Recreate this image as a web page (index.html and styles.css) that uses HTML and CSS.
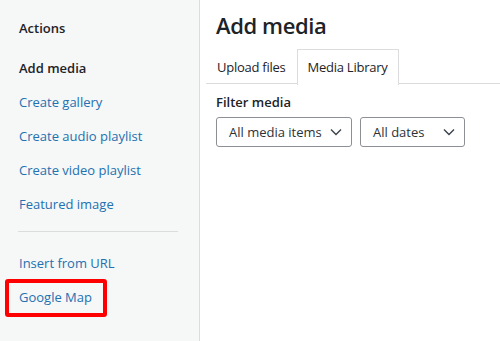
FILE: index.html
```html
<!DOCTYPE html>
<html lang="en">
<head>
<meta charset="utf-8">
<title>Add media</title>
<link rel="stylesheet" href="styles.css">
</head>
<body>
<div class="modal">
  <aside class="menu">
    <h2 class="menu-heading">Actions</h2>
    <ul class="menu-list">
      <li class="menu-item active">Add media</li>
      <li class="menu-item"><a href="#">Create gallery</a></li>
      <li class="menu-item"><a href="#">Create audio playlist</a></li>
      <li class="menu-item"><a href="#">Create video playlist</a></li>
      <li class="menu-item"><a href="#">Featured image</a></li>
    </ul>
    <div class="separator"></div>
    <ul class="menu-list">
      <li class="menu-item"><a href="#">Insert from URL</a></li>
      <li class="menu-item highlighted"><a href="#">Google Map</a></li>
    </ul>
  </aside>
  <main class="content">
    <h1 class="title">Add media</h1>
    <nav class="router">
      <span class="tab">Upload files</span>
      <span class="tab active">Media Library</span>
    </nav>
    <div class="toolbar">
      <div class="filter-label">Filter media</div>
      <div class="filters">
        <div class="select select-type"><span>All media items</span>
          <svg class="chev" width="12" height="8" viewBox="0 0 12 8"><path d="M1 1.5l5 5 5-5" fill="none" stroke="#3c434a" stroke-width="1.4"/></svg>
        </div>
        <div class="select select-date"><span>All dates</span>
          <svg class="chev" width="12" height="8" viewBox="0 0 12 8"><path d="M1 1.5l5 5 5-5" fill="none" stroke="#3c434a" stroke-width="1.4"/></svg>
        </div>
      </div>
    </div>
  </main>
</div>
</body>
</html>
```
FILE: styles.css
```css
*, *::before, *::after { box-sizing: border-box; }
html, body { margin: 0; padding: 0; }
body {
  width: 500px;
  height: 341px;
  overflow: hidden;
  background: #fff;
  font-family: "Open Sans", "Noto Sans", sans-serif;
  color: #1d2327;
}
.modal {
  display: flex;
  height: 341px;
}
.menu {
  width: 200px;
  flex: none;
  background: #f6f7f7;
  border-right: 1px solid #dcdcde;
  padding: 19px 0 0 0;
}
.menu-heading {
  margin: 0 0 14px 19px;
  font-size: 13px;
  line-height: 18px;
  font-weight: 600;
  color: #1d2327;
}
.menu-list {
  list-style: none;
  margin: 0;
  padding: 0;
}
.menu-item {
  padding: 8px 0 8px 19px;
  font-size: 13px;
  line-height: 18px;
}
.menu-item a {
  color: #2271b1;
  text-decoration: none;
}
.menu-item.active {
  font-weight: 600;
  color: #1d2327;
}
.separator {
  height: 1px;
  background: #dcdcde;
  margin: 10px 21px 14px 18px;
}
.highlighted {
  position: relative;
}
.highlighted::after {
  content: "";
  position: absolute;
  left: 5px;
  top: -1px;
  width: 102px;
  height: 38px;
  border: 4px solid #f00;
  border-radius: 3px;
}
.content {
  flex: 1;
  padding: 0 0 0 16px;
}
.title {
  margin: 0;
  padding-top: 10px;
  font-size: 22px;
  line-height: 30px;
  font-weight: 600;
  letter-spacing: -0.4px;
  color: #1d2327;
}
.router {
  display: flex;
  margin: 9px 0 0 -10px;
  border-bottom: 1px solid #dcdcde;
  height: 35px;
}
.tab {
  padding: 0 10px;
  font-size: 13px;
  line-height: 34px;
  letter-spacing: -0.25px;
  color: #1d2327;
  border: 1px solid transparent;
  border-bottom: none;
}
.tab.active {
  background: #fff;
  border-color: #dcdcde;
  margin-bottom: -1px;
  height: 36px;
}
.toolbar {
  padding-top: 9px;
}
.filter-label {
  font-size: 13px;
  line-height: 18px;
  font-weight: 600;
}
.filters {
  display: flex;
  gap: 8px;
  margin-top: 6px;
}
.select {
  display: flex;
  align-items: center;
  justify-content: space-between;
  height: 30px;
  border: 1px solid #8c8f94;
  border-radius: 3px;
  padding: 0 9px 0 12px;
  font-size: 13px;
  color: #2c3338;
}
.select-type { width: 136px; }
.select-date { width: 105px; }
.chev { flex: none; }
```
